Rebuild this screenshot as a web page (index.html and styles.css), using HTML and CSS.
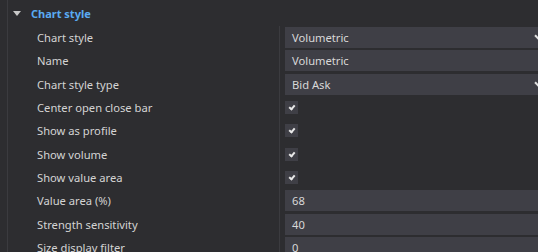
FILE: index.html
```html
<!DOCTYPE html>
<html lang="en">
<head>
    <meta charset="UTF-8">
    <title>Chart style</title>
    <link rel="stylesheet" href="styles.css">
</head>
<body>
    <div class="grid">
        <div class="category">
            <span class="arrow"></span>
            <span class="cat-title">Chart style</span>
        </div>

        <div class="label">Chart style</div>
        <div class="value"><div class="field select">Volumetric<span class="chev"></span></div></div>

        <div class="label">Name</div>
        <div class="value"><div class="field">Volumetric</div></div>

        <div class="label">Chart style type</div>
        <div class="value"><div class="field select">Bid Ask<span class="chev"></span></div></div>

        <div class="label">Center open close bar</div>
        <div class="value"><span class="check"></span></div>

        <div class="label">Show as profile</div>
        <div class="value"><span class="check"></span></div>

        <div class="label">Show volume</div>
        <div class="value"><span class="check"></span></div>

        <div class="label">Show value area</div>
        <div class="value"><span class="check"></span></div>

        <div class="label">Value area (%)</div>
        <div class="value"><div class="field">68</div></div>

        <div class="label">Strength sensitivity</div>
        <div class="value"><div class="field">40</div></div>

        <div class="label">Size display filter</div>
        <div class="value"><div class="field">0</div></div>
    </div>
</body>
</html>
```

FILE: styles.css
```css
html, body {
    margin: 0;
    padding: 0;
    background: #2d2d30;
    overflow: hidden;
}

body {
    font-family: "Noto Sans", "Open Sans", sans-serif;
    font-size: 11.2px;
    color: #d4d4d4;
}

.grid {
    width: 540px;
    margin-left: 7px;
    border-left: 1px solid #3b3b3f;
    display: grid;
    grid-template-columns: 272px 1fr;
    grid-template-rows: 26px;
    grid-auto-rows: 23.333px;
}

.category {
    grid-column: span 2;
    display: flex;
    align-items: center;
    padding-left: 5px;
}

.arrow {
    width: 0;
    height: 0;
    border-left: 4px solid transparent;
    border-right: 4px solid transparent;
    border-top: 5px solid #c8c8c8;
    margin-right: 10px;
    margin-top: 1px;
}

.cat-title {
    font-weight: bold;
    color: #5aaaf2;
    font-size: 11px;
}

.label {
    padding-left: 29px;
    display: flex;
    align-items: center;
    border-right: 1px solid #3b3b3f;
    white-space: nowrap;
}

.value {
    padding-left: 5px;
    display: flex;
    align-items: center;
}

.field {
    flex: 1;
    height: 21px;
    background: #3f3f46;
    display: flex;
    align-items: center;
    padding-left: 7px;
    color: #d8d8d8;
    position: relative;
}

.chev {
    position: absolute;
    right: 4px;
    top: 5px;
    width: 6px;
    height: 6px;
    border-right: 2px solid #e0e0e0;
    border-bottom: 2px solid #e0e0e0;
    transform: rotate(45deg);
}

.check {
    width: 13px;
    height: 13px;
    background: #3f3f46;
    position: relative;
}

.check::after {
    content: "";
    position: absolute;
    left: 5px;
    top: 3px;
    width: 2px;
    height: 4px;
    border-right: 2px solid #e8e8e8;
    border-bottom: 2px solid #e8e8e8;
    transform: rotate(40deg);
}
```
